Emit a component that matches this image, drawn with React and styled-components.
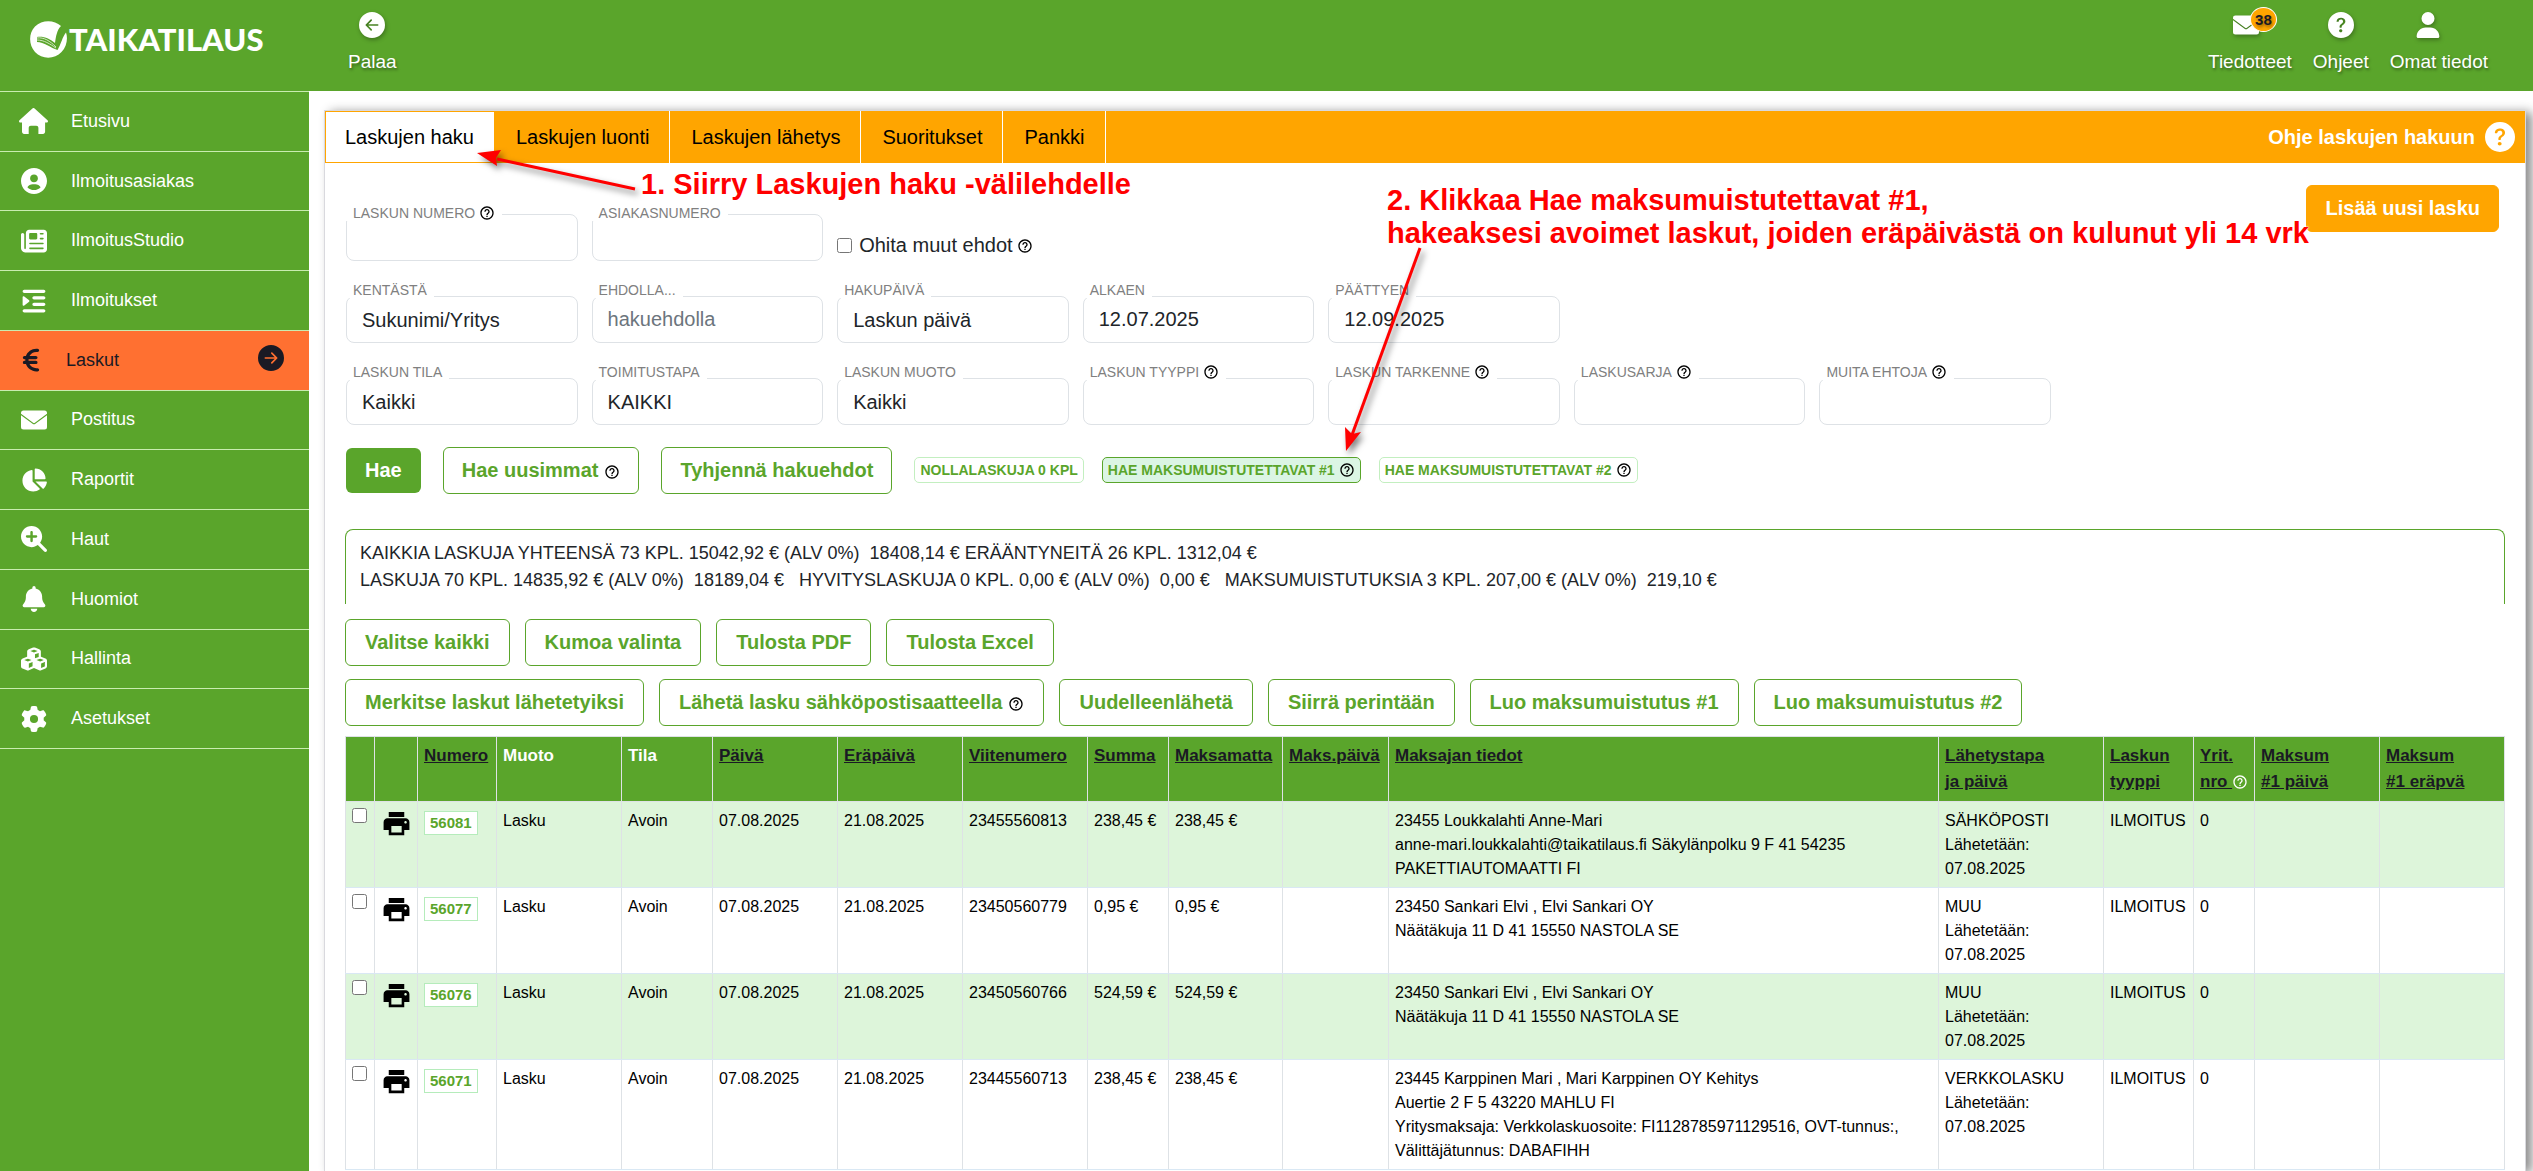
import React, { useState } from 'react';
import styled, { createGlobalStyle, css } from 'styled-components';
import {
	FaNewspaper, FaIndent, FaEuroSign, FaChartPie, FaMagnifyingGlassPlus,
	FaBell, FaCubes, FaGear, FaUser,
} from 'react-icons/fa6';
import {
	BsArrowLeftCircleFill, BsArrowRightCircleFill, BsQuestionCircleFill,
} from 'react-icons/bs';
import { BiSolidUserCircle } from 'react-icons/bi';
import { MdHelpOutline, MdPrint } from 'react-icons/md';

const Colors = {
	GREEN: '#5aa52b',
	LIGHT: '#c9ecb0',
	PALE: '#ddf5da',
	ORANGE: '#ffa500',
	ACTIVE: '#ff7031',
	DARK: '#1a1a24',
	TEXT: '#212529',
	LINE: '#dee2e6',
	RED: '#ff0000',
};

const GlobalStyle = createGlobalStyle`
	* { box-sizing: border-box; }

	body {
		margin: 0;
		background: #fff;
		color: ${Colors.TEXT};
		font-family: "Liberation Sans", Arial, sans-serif;
		font-size: 20px;
	}

	button, input, select { font-family: inherit; }
`;

const Page = styled.div`
	position: relative;
	display: grid;
	grid-template-columns: 309px 1fr;
	grid-template-rows: 91px 1fr;
	min-height: 100vh;
	overflow: hidden;
`;

const Header = styled.header`
	grid-column: 1 / -1;
	display: flex;
	justify-content: space-between;
	background: ${Colors.GREEN};
	padding: 12px 45px 0 30px;
`;

const HeaderGroup = styled.div`
	display: flex;
	align-items: flex-start;
	gap: 21px;
`;

const Logo = styled.a`
	display: flex;
	align-items: center;
	gap: 2px;
	width: 297px;
	height: 54px;
	color: #fff;
	text-decoration: none;
	font-family: Lato, sans-serif;
	font-weight: 900;
	font-size: 31px;
`;

const HeaderLink = styled.a`
	display: flex;
	flex-direction: column;
	align-items: center;
	gap: 13px;
	color: #fff;
	text-decoration: none;
	font-size: 19px;
	line-height: 22px;
	text-shadow: 1px 2px 3px rgba(0, 0, 0, 0.4);
`;

const HeaderIcon = styled.span`
	position: relative;
	display: flex;
	padding-right: ${props => props.$trail || 0}px;

	svg {
		width: auto;
		height: 26px;
		filter: drop-shadow(1px 2px 2px rgba(0, 0, 0, 0.3));
	}
`;

const Badge = styled.span`
	position: absolute;
	left: 17px;
	top: -5px;
	width: 27px;
	height: 25px;
	border: 1px solid #fff;
	border-radius: 50%;
	background: ${Colors.ORANGE};
	color: ${Colors.DARK};
	font-size: 15px;
	font-weight: bold;
	line-height: 23px;
	text-align: center;
`;

const Sidebar = styled.nav`
	background: ${Colors.GREEN};
`;

const Menu = styled.ul`
	display: grid;
	grid-auto-rows: 1fr;
	min-height: 658px;
	margin: 0;
	padding: 0;
	border-bottom: 1px solid ${Colors.LIGHT};
	list-style: none;
`;

const MenuItem = styled.li`
	display: flex;
	border-top: 1px solid ${Colors.LIGHT};
	background: ${props => props.$active ? Colors.ACTIVE : 'transparent'};
`;

const MenuLink = styled.a`
	flex: 1;
	display: flex;
	align-items: center;
	padding: 0 25px 0 19px;
	color: ${props => props.$active ? Colors.DARK : '#fff'};
	font-size: 18px;
	text-decoration: none;
`;

const MenuIcon = styled.span`
	display: flex;
	justify-content: center;
	width: ${props => props.$active ? 24 : 29}px;
	margin-right: 23px;

	svg {
		width: auto;
		height: 26px;
	}
`;

const MenuArrow = styled.span`
	display: flex;
	margin-left: auto;
	padding-bottom: 4px;
	font-size: 26px;
`;

const Card = styled.main`
	margin: 19px 7px 0 15px;
	border: 1px solid #d9d9de;
	border-bottom: none;
	box-shadow: 6px 2px 10px rgba(0, 0, 0, 0.45);
`;

const TabBar = styled.div`
	display: flex;
	align-items: stretch;
	height: 52px;
	background: ${Colors.ORANGE};
`;

const Tab = styled.button`
	padding: 0 20px 0 21px;
	border: none;
	border-right: 1px solid #fff;
	background: transparent;
	color: #000;
	font-size: 20px;

	${props => props.$active && css`
		padding: 0 20px 0 19px;
		border: 1px solid ${Colors.ORANGE};
		background: #fff;
	`}
`;

const TabHelp = styled.a`
	display: flex;
	align-items: center;
	gap: 10px;
	margin-left: auto;
	padding-right: 10px;
	color: #fff;
	font-weight: bold;
	text-decoration: none;

	svg { font-size: 30px; }
`;

const SearchArea = styled.div`
	display: flex;
	align-items: flex-start;
	padding: 22px 26px 0 21px;
`;

const SearchForm = styled.form`
	flex: 1;
	padding-top: 29px;
`;

const Fields = styled.div`
	display: grid;
	grid-template-columns: repeat(7, 1fr);
	gap: 35px 14px;
	max-width: 1705px;
`;

const FieldBox = styled.div`
	position: relative;
	grid-column-start: ${props => props.$first ? 1 : 'auto'};
`;

const FieldLabel = styled.label`
	position: absolute;
	left: 0;
	top: ${props => props.$low ? -10 : -15}px;
	display: flex;
	align-items: center;
	height: 17px;
	padding: 0 7px;
	background: #fff;
	color: #808080;
	font-size: 14px;
	white-space: nowrap;
`;

const HelpIcon = styled(MdHelpOutline)`
	flex: none;
	width: 16px;
	height: 16px;
	margin-left: ${props => props.$light ? 0 : 4}px;
	color: ${props => props.$light ? '#fff' : '#000'};
	vertical-align: -3px;
`;

const control = css`
	display: block;
	width: 100%;
	height: 47px;
	padding: 0 15px;
	border: 1px solid ${Colors.LINE};
	border-radius: 8px;
	background: #fff;
	color: ${Colors.TEXT};
	font-size: 20px;
	appearance: none;
`;

const TextInput = styled.input`
	${control}

	&::placeholder { color: #6c757d; }
`;

const Select = styled.select`
	${control}
`;

const CheckLabel = styled.label`
	display: flex;
	align-items: center;
	padding-top: 16px;
	white-space: nowrap;
`;

const Checkbox = styled.input`
	display: block;
	width: 15px;
	height: 15px;
	margin: 0;
`;

const CheckText = styled.span`
	margin-left: 7px;
`;

const FormActions = styled.div`
	display: flex;
	align-items: center;
	gap: 22px;
	margin-top: 22px;
`;

const Chips = styled.div`
	display: flex;
	align-items: center;
	gap: 18px;
	padding-bottom: 2px;
`;

const Button = styled.button`
	padding: 11px 18px;
	border: 1px solid ${Colors.GREEN};
	border-radius: 6px;
	background: #fff;
	color: ${Colors.GREEN};
	font-size: 20px;
	font-weight: bold;
	line-height: 23px;
	white-space: nowrap;

	${HelpIcon} { margin-left: 6px; }
`;

const SolidButton = styled(Button)`
	padding: 11px 19px;
	border: none;
	background: ${Colors.GREEN};
	color: #fff;
`;

const AddButton = styled(Button)`
	border-color: ${Colors.ORANGE};
	background: ${Colors.ORANGE};
	color: #fff;
`;

const Chip = styled.button`
	display: flex;
	align-items: center;
	min-height: 25px;
	padding: 4px 5px;
	border: 1px solid ${props => props.$active ? Colors.GREEN : '#c3efc0'};
	border-radius: 5px;
	background: ${props => props.$active ? '#dbf5e4' : '#fff'};
	color: ${Colors.GREEN};
	font-size: 14px;
	font-weight: bold;
	white-space: nowrap;
`;

const Results = styled.section`
	padding: 35px 20px 0;
`;

const Summary = styled.p`
	margin: 0 0 15px;
	padding: 10px 14px;
	border: 1px solid ${Colors.GREEN};
	border-bottom: none;
	border-radius: 8px 8px 0 0;
	font-size: 18px;
	line-height: 27px;
`;

const Actions = styled.div`
	display: flex;
	gap: 15px;
	margin-bottom: ${props => props.$last ? 10 : 13}px;

	${Button} { padding: 11px 19px; }
`;

const Table = styled.table`
	width: 100%;
	table-layout: fixed;
	border-collapse: collapse;
	font-size: 16px;
	line-height: 24px;
	color: #000;
`;

const HeadCell = styled.th`
	padding: 6px 0 6px 6px;
	border: 1px solid ${Colors.LINE};
	border-bottom: none;
	background: ${Colors.GREEN};
	color: #fff;
	font-size: 17px;
	line-height: 26px;
	text-align: left;
	vertical-align: top;
	white-space: pre;

	a { color: ${Colors.DARK}; }
`;

const Row = styled.tr`
	background: ${props => props.$odd ? Colors.PALE : '#fff'};
`;

const Cell = styled.td`
	padding: ${props => props.$icon ? '6px 0 0 6px' : '7px 5px 6px 6px'};
	border: 1px solid ${Colors.LINE};
	border-bottom-color: #d9e8f4;
	vertical-align: top;
	white-space: pre-line;
`;

const PrintButton = styled.button`
	display: flex;
	padding: 0;
	border: none;
	background: none;
	color: #000;
	font-size: 31px;
`;

const NumberLink = styled.a`
	display: inline-block;
	margin-top: 2px;
	padding: 0 5px;
	border: 1px solid #b5ecbb;
	background: #fff;
	color: ${Colors.GREEN};
	font-size: 15px;
	font-weight: bold;
	line-height: 22px;
	text-decoration: none;
`;

// Guide notes float over the page, they take no room in it
const Note = styled.p`
	position: absolute;
	left: ${props => props.$x}px;
	top: ${props => props.$y}px;
	margin: 0;
	color: ${Colors.RED};
	font-size: 29px;
	font-weight: bold;
	line-height: 33px;
	white-space: pre;
	text-shadow: 0 0 2px #fff, 0 0 2px #fff;
	pointer-events: none;
`;

const Arrow = styled.svg`
	position: absolute;
	left: ${props => props.$x}px;
	top: ${props => props.$y}px;
	overflow: visible;
	pointer-events: none;
	filter: drop-shadow(3px 4px 3px rgba(0, 0, 0, 0.5));
`;

const HomeIcon = () => (
	<svg viewBox="0 0 29 26" fill="currentColor">
		<path d="M13.4.5a1.6 1.6 0 0 1 2.2 0l12.9 11.7c1 .9.4 2.4-.9 2.4h-1.5v9.2c0 1.2-.9 2.1-2.1 2.1h-4.600v-6c0-1.300-.9-2.200-2.200-2.200h-5.300c-1.300 0-2.200.9-2.200 2.200v6H5.100c-1.200 0-2.100-.9-2.100-2.100v-9.200H1.400c-1.300 0-1.900-1.500-.9-2.400z" />
	</svg>
);

const MailIcon = () => (
	<svg viewBox="0 0 26 26" fill="currentColor">
		<path d="M2.500 3.500h21A2.500 2.500 0 0 1 26 6v.8L13.900 15.800a1.500 1.500 0 0 1-1.800 0L0 6.800V6a2.500 2.500 0 0 1 2.500-2.500z" />
		<path d="M0 8.200l11.600 8.600a2.400 2.400 0 0 0 2.800 0L26 8.200V20a2.500 2.500 0 0 1-2.500 2.500h-21A2.500 2.500 0 0 1 0 20z" />
	</svg>
);

const UserIcon = () => <BiSolidUserCircle viewBox="2 2 20 20" />;

const LogoMark = () => (
	<svg width="37" height="37" viewBox="0 0 37 37" fill="none">
		<path d="M31 5C24-1.500 12-1.500 5 5.500-1.500 12-1.500 24 5 31c7 7.500 19.500 7.500 26.500 0C37 25.500 38 17 36 11.500c-3.500 4-5 12-8.500 17.500C21 27 14 21 7 21v-5c7-1 13 2 18 6C26 15 27 9 31 5z" fill="#fff" />
		<path d="M7 17c7-1 13 3 19 9M7 19c7 0 13 4 19 8" stroke="#cfe6c0" strokeWidth="1" />
	</svg>
);

const MENU = [
	{ label: 'Etusivu', icon: HomeIcon },
	{ label: 'Ilmoitusasiakas', icon: UserIcon },
	{ label: 'IlmoitusStudio', icon: FaNewspaper },
	{ label: 'Ilmoitukset', icon: FaIndent },
	{ label: 'Laskut', icon: FaEuroSign, active: true },
	{ label: 'Postitus', icon: MailIcon },
	{ label: 'Raportit', icon: FaChartPie },
	{ label: 'Haut', icon: FaMagnifyingGlassPlus },
	{ label: 'Huomiot', icon: FaBell },
	{ label: 'Hallinta', icon: FaCubes },
	{ label: 'Asetukset', icon: FaGear },
];

const TABS = ['Laskujen haku', 'Laskujen luonti', 'Laskujen lähetys', 'Suoritukset', 'Pankki'];

const FIELDS = [
	{ id: 'kentasta', label: 'KENTÄSTÄ', options: ['Sukunimi/Yritys'], first: true },
	{ id: 'ehdolla', label: 'EHDOLLA...', placeholder: 'hakuehdolla' },
	{ id: 'hakupaiva', label: 'HAKUPÄIVÄ', options: ['Laskun päivä'] },
	{ id: 'alkaen', label: 'ALKAEN', value: '12.07.2025' },
	{ id: 'paattyen', label: 'PÄÄTTYEN', value: '12.09.2025' },
	{ id: 'tila', label: 'LASKUN TILA', options: ['Kaikki'], first: true },
	{ id: 'toimitustapa', label: 'TOIMITUSTAPA', options: ['KAIKKI'] },
	{ id: 'muoto', label: 'LASKUN MUOTO', options: ['Kaikki'] },
	{ id: 'tyyppi', label: 'LASKUN TYYPPI', help: true },
	{ id: 'tarkenne', label: 'LASKUN TARKENNE', help: true },
	{ id: 'sarja', label: 'LASKUSARJA', help: true },
	{ id: 'muita', label: 'MUITA EHTOJA', help: true },
];

const COLUMNS = [
	{ width: 29 },
	{ width: 43 },
	{ width: 79, title: 'Numero', sort: true },
	{ width: 125, title: 'Muoto' },
	{ width: 91, title: 'Tila' },
	{ width: 125, title: 'Päivä', sort: true },
	{ width: 125, title: 'Eräpäivä', sort: true },
	{ width: 125, title: 'Viitenumero', sort: true },
	{ width: 81, title: 'Summa', sort: true },
	{ width: 114, title: 'Maksamatta', sort: true },
	{ width: 106, title: 'Maks.päivä', sort: true },
	{ title: 'Maksajan tiedot', sort: true },
	{ width: 165, title: 'Lähetystapa\nja päivä', sort: true },
	{ width: 90, title: 'Laskun\ntyyppi', sort: true },
	{ width: 61, title: 'Yrit.\nnro ', sort: true, help: true },
	{ width: 125, title: 'Maksum\n#1 päivä', sort: true },
	{ width: 125, title: 'Maksum\n#1 eräpvä', sort: true },
];

const INVOICES = [
	{
		id: '56081', ref: '23455560813', sum: '238,45 €', way: 'SÄHKÖPOSTI',
		payer: '23455 Loukkalahti Anne-Mari\nanne-mari.loukkalahti@taikatilaus.fi Säkylänpolku 9 F 41 54235\nPAKETTIAUTOMAATTI FI',
	},
	{
		id: '56077', ref: '23450560779', sum: '0,95 €', way: 'MUU',
		payer: '23450 Sankari Elvi , Elvi Sankari OY\nNäätäkuja 11 D 41 15550 NASTOLA SE',
	},
	{
		id: '56076', ref: '23450560766', sum: '524,59 €', way: 'MUU',
		payer: '23450 Sankari Elvi , Elvi Sankari OY\nNäätäkuja 11 D 41 15550 NASTOLA SE',
	},
	{
		id: '56071', ref: '23445560713', sum: '238,45 €', way: 'VERKKOLASKU',
		payer: '23445 Karppinen Mari , Mari Karppinen OY Kehitys\nAuertie 2 F 5 43220 MAHLU FI\nYritysmaksaja: Verkkolaskuosoite: FI1128785971129516, OVT-tunnus:,\nVälittäjätunnus: DABAFIHH',
	},
];

const Field = ({ id, label, options, value, placeholder, help, first, low }) => (
	<FieldBox $first={first}>
		{options
			? <Select id={id}>{options.map(o => <option key={o}>{o}</option>)}</Select>
			: <TextInput id={id} defaultValue={value} placeholder={placeholder} />
		}
		<FieldLabel htmlFor={id} $low={low}>{label}{help && <HelpIcon />}</FieldLabel>
	</FieldBox>
);

const InvoiceTable = () => (
	<Table>
		<colgroup>
			{COLUMNS.map((c, i) => <col key={i} width={c.width} />)}
		</colgroup>
		<thead>
			<tr>
				{COLUMNS.map((c, i) => (
					<HeadCell key={i}>
						{c.sort ? <a href="#sort">{c.title}</a> : c.title}
						{c.help && <HelpIcon $light />}
					</HeadCell>
				))}
			</tr>
		</thead>
		<tbody>
			{INVOICES.map((row, i) => (
				<Row key={row.id} $odd={i % 2 === 0}>
					<Cell $icon><Checkbox type="checkbox" aria-label={row.id} /></Cell>
					<Cell $icon><PrintButton aria-label="Tulosta"><MdPrint /></PrintButton></Cell>
					<Cell><NumberLink href={'#' + row.id}>{row.id}</NumberLink></Cell>
					<Cell>Lasku</Cell>
					<Cell>Avoin</Cell>
					<Cell>07.08.2025</Cell>
					<Cell>21.08.2025</Cell>
					<Cell>{row.ref}</Cell>
					<Cell>{row.sum}</Cell>
					<Cell>{row.sum}</Cell>
					<Cell />
					<Cell>{row.payer}</Cell>
					<Cell>{row.way + '\nLähetetään:\n07.08.2025'}</Cell>
					<Cell>ILMOITUS</Cell>
					<Cell>0</Cell>
					<Cell />
					<Cell />
				</Row>
			))}
		</tbody>
	</Table>
);

const App = () => {
	const [tab, setTab] = useState(TABS[0]);

	return (
		<Page>
			<GlobalStyle />

			<Header>
				<HeaderGroup>
					<Logo href="#"><LogoMark />TAIKATILAUS</Logo>
					<HeaderLink href="#palaa">
						<HeaderIcon><BsArrowLeftCircleFill /></HeaderIcon>
						Palaa
					</HeaderLink>
				</HeaderGroup>
				<HeaderGroup>
					<HeaderLink href="#tiedotteet">
						<HeaderIcon $trail={8}><MailIcon /><Badge>38</Badge></HeaderIcon>
						Tiedotteet
					</HeaderLink>
					<HeaderLink href="#ohjeet">
						<HeaderIcon><BsQuestionCircleFill /></HeaderIcon>
						Ohjeet
					</HeaderLink>
					<HeaderLink href="#omat">
						<HeaderIcon $trail={22}><FaUser /></HeaderIcon>
						Omat tiedot
					</HeaderLink>
				</HeaderGroup>
			</Header>

			<Sidebar>
				<Menu>
					{MENU.map(({ label, icon: Icon, active }) => (
						<MenuItem key={label} $active={active}>
							<MenuLink href="#" $active={active}>
								<MenuIcon $active={active}><Icon /></MenuIcon>
								{label}
								{active && <MenuArrow><BsArrowRightCircleFill /></MenuArrow>}
							</MenuLink>
						</MenuItem>
					))}
				</Menu>
			</Sidebar>

			<Card>
				<TabBar>
					{TABS.map(t => (
						<Tab key={t} $active={t === tab} onClick={() => setTab(t)}>{t}</Tab>
					))}
					<TabHelp href="#ohje">Ohje laskujen hakuun <BsQuestionCircleFill /></TabHelp>
				</TabBar>

				<SearchArea>
					<SearchForm onSubmit={e => e.preventDefault()}>
						<Fields>
							<Field id="numero" label="LASKUN NUMERO" help low />
							<Field id="asiakas" label="ASIAKASNUMERO" low />
							<CheckLabel>
								<Checkbox type="checkbox" />
								<CheckText>Ohita muut ehdot</CheckText>
								<HelpIcon />
							</CheckLabel>
							{FIELDS.map(f => <Field key={f.id} {...f} />)}
						</Fields>
						<FormActions>
							<SolidButton>Hae</SolidButton>
							<Button>Hae uusimmat<HelpIcon /></Button>
							<Button>Tyhjennä hakuehdot</Button>
							<Chips>
								<Chip>NOLLALASKUJA 0 KPL</Chip>
								<Chip $active>HAE MAKSUMUISTUTETTAVAT #1<HelpIcon /></Chip>
								<Chip>HAE MAKSUMUISTUTETTAVAT #2<HelpIcon /></Chip>
							</Chips>
						</FormActions>
					</SearchForm>
					<AddButton>Lisää uusi lasku</AddButton>
				</SearchArea>

				<Results>
					<Summary>
						KAIKKIA LASKUJA YHTEENSÄ 73 KPL. 15042,92 € (ALV 0%)&nbsp; 18408,14 € ERÄÄNTYNEITÄ 26 KPL. 1312,04 €
						<br />
						LASKUJA 70 KPL. 14835,92 € (ALV 0%)&nbsp; 18189,04 € &nbsp; HYVITYSLASKUJA 0 KPL. 0,00 € (ALV 0%)&nbsp; 0,00 € &nbsp; MAKSUMUISTUTUKSIA 3 KPL. 207,00 € (ALV 0%)&nbsp; 219,10 €
					</Summary>
					<Actions>
						<Button>Valitse kaikki</Button>
						<Button>Kumoa valinta</Button>
						<Button>Tulosta PDF</Button>
						<Button>Tulosta Excel</Button>
					</Actions>
					<Actions $last>
						<Button>Merkitse laskut lähetetyiksi</Button>
						<Button>Lähetä lasku sähköpostisaatteella<HelpIcon /></Button>
						<Button>Uudelleenlähetä</Button>
						<Button>Siirrä perintään</Button>
						<Button>Luo maksumuistutus #1</Button>
						<Button>Luo maksumuistutus #2</Button>
					</Actions>
					<InvoiceTable />
				</Results>
			</Card>

			<Note $x={641} $y={168}>1. Siirry Laskujen haku -välilehdelle</Note>
			<Note $x={1387} $y={184}>{'2. Klikkaa Hae maksumuistutettavat #1,\nhakeaksesi avoimet laskut, joiden eräpäivästä on kulunut yli 14 vrk'}</Note>
			<Arrow $x={477} $y={150} width="160" height="42">
				<path d="M158 39 20 9" stroke="#f00" strokeWidth="3" />
				<path d="M0 3 24 0 19 8 20 16z" fill="#f00" />
			</Arrow>
			<Arrow $x={1345} $y={247} width="78" height="206">
				<path d="M75 1 7 188" stroke="#f00" strokeWidth="3" />
				<path d="M1 204 0 180 7 187 16 185z" fill="#f00" />
			</Arrow>
		</Page>
	);
};

export default App;
